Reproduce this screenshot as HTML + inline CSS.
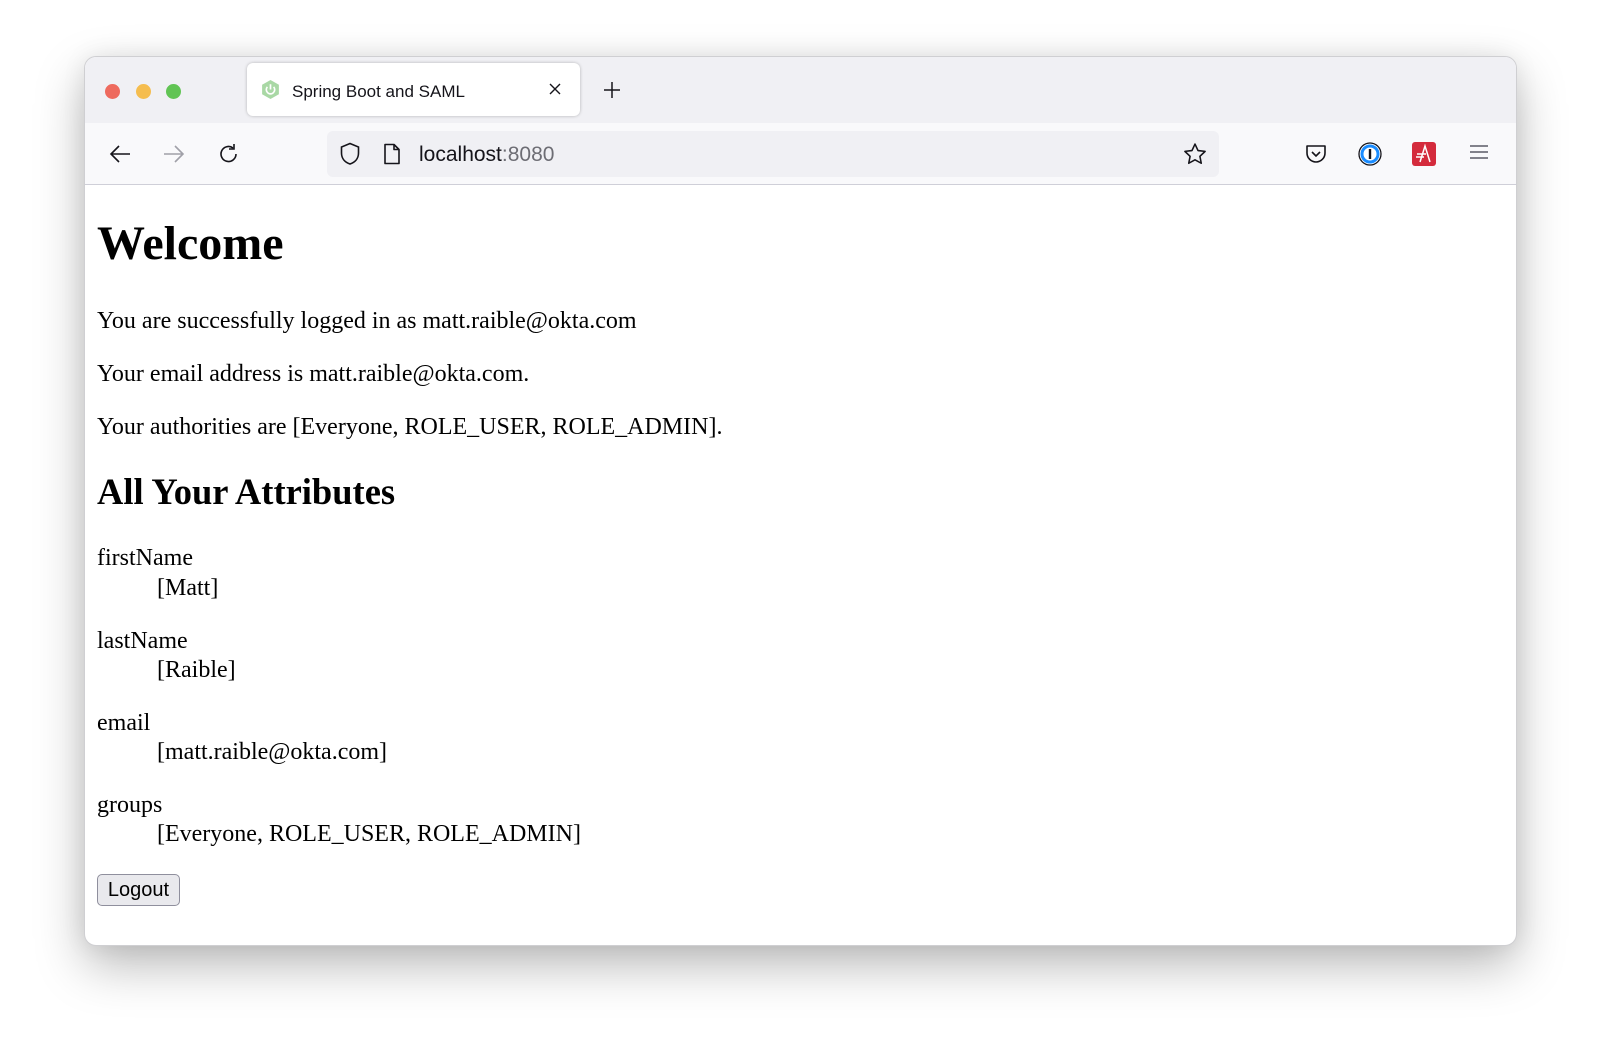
<!DOCTYPE html>
<html><head><meta charset="utf-8"><style>
*{margin:0;padding:0;box-sizing:border-box}
html,body{width:1600px;height:1056px;background:#fff;overflow:hidden}
.win{position:absolute;left:85px;top:57px;width:1431px;height:888px;border-radius:11px;background:#fff;box-shadow:0 0 0 1px #cfcfd2,0 20px 50px rgba(0,0,0,.28),0 0 25px rgba(0,0,0,.08);overflow:hidden}
.tabbar{position:absolute;left:0;top:0;width:100%;height:66px;background:#f0f0f4}
.toolbar{position:absolute;left:0;top:66px;width:100%;height:62px;background:#f9f9fb;border-bottom:1px solid #cfcfd8}
.dot{position:absolute;top:27px;width:15px;height:15px;border-radius:50%}
.tab{position:absolute;left:162px;top:6px;width:333px;height:53px;background:#fff;border-radius:6px;box-shadow:0 0 3px rgba(0,0,0,.25)}
.a{position:absolute;font-family:"Liberation Sans",sans-serif}
.s{position:absolute;font-family:"Liberation Serif",serif;line-height:1;color:#000;white-space:nowrap}
.url{position:absolute;left:242px;top:8px;width:892px;height:46px;background:#f0f0f4;border-radius:6px}
</style></head><body>
<div class="win">
 <div class="tabbar">
  <div class="dot" style="left:20px;background:#ee6a5e"></div>
  <div class="dot" style="left:51px;background:#f5bd4f"></div>
  <div class="dot" style="left:81px;background:#61c454"></div>
  <div class="tab">
   <svg style="position:absolute;left:13px;top:16px" width="21" height="21" viewBox="0 0 20 20"><polygon points="10,1 18,5.5 18,14.5 10,19 2,14.5 2,5.5" fill="#a9d8a5"/><path d="M7 7.5a4 4 0 1 0 6 0" stroke="#fff" stroke-width="1.6" fill="none"/><path d="M10 5v5" stroke="#fff" stroke-width="1.6"/></svg>
   <div class="a" style="left:45px;top:19px;font-size:17px;color:#15141a">Spring Boot and SAML</div>
   <svg style="position:absolute;left:302px;top:20px" width="12" height="12"><path d="M1 1L11 11M11 1L1 11" stroke="#15141a" stroke-width="1.4"/></svg>
  </div>
  <svg style="position:absolute;left:518px;top:24px" width="18" height="18"><path d="M9 1v16M1 9h16" stroke="#15141a" stroke-width="1.5"/></svg>
 </div>
 <div class="toolbar">
  <svg style="position:absolute;left:24px;top:21px" width="22" height="20"><path d="M21 10H3M10 2L2 10l8 8" stroke="#15141a" stroke-width="1.6" fill="none"/></svg>
  <svg style="position:absolute;left:78px;top:21px" width="22" height="20"><path d="M1 10h18M12 2l8 8-8 8" stroke="#a0a0a8" stroke-width="1.6" fill="none"/></svg>
  <svg style="position:absolute;left:132px;top:19px" width="24" height="24"><path d="M19 12a7.5 7.5 0 1 1-3-6" stroke="#15141a" stroke-width="1.6" fill="none"/><path d="M17 2v5h-5" stroke="#15141a" stroke-width="1.6" fill="none"/></svg>
  <div class="url">
   <svg style="position:absolute;left:12px;top:11px" width="22" height="24"><path d="M11 1.5L2.5 5v6c0 6 4 9.5 8.5 11 4.5-1.5 8.5-5 8.5-11V5z" stroke="#15141a" stroke-width="1.6" fill="none"/></svg>
   <svg style="position:absolute;left:56px;top:12px" width="18" height="22"><path d="M2 1.5h9l5 5v14H2z M11 1.5v5h5" stroke="#15141a" stroke-width="1.6" fill="none" stroke-linejoin="round"/></svg>
   <div class="a" style="left:92px;top:12px;font-size:21px;color:#15141a">localhost<span style="color:#6d6d74">:8080</span></div>
   <svg style="position:absolute;left:855px;top:11px" width="26" height="25" viewBox="0 0 24 24"><path d="M12 2l2.9 6.2 6.8.8-5 4.7 1.3 6.7L12 17.1 6 20.4l1.3-6.7-5-4.7 6.8-.8z" stroke="#15141a" stroke-width="1.5" fill="none" stroke-linejoin="round"/></svg>
  </div>
  <svg style="position:absolute;left:1220px;top:20px" width="22" height="22"><path d="M2 3h18v7a9 9 0 0 1-18 0z" stroke="#15141a" stroke-width="1.6" fill="none" stroke-linejoin="round"/><path d="M7 9l4 4 4-4" stroke="#15141a" stroke-width="1.6" fill="none"/></svg>
  <svg style="position:absolute;left:1273px;top:19px" width="24" height="24"><circle cx="12" cy="12" r="11" fill="#fff" stroke="#15141a" stroke-width="1.3"/><circle cx="12" cy="12" r="8" fill="none" stroke="#1a8cff" stroke-width="3"/><rect x="10.8" y="7" width="2.4" height="10" fill="#15141a"/></svg>
  <svg style="position:absolute;left:1327px;top:19px" width="24" height="24"><rect width="24" height="24" rx="3" fill="#d42b3c"/><path d="M8 20L13 4l5 16M5 12h9M4 15h8" stroke="#fff" stroke-width="1.5" fill="none"/></svg>
  <svg style="position:absolute;left:1385px;top:21px" width="18" height="16"><path d="M0 2h18M0 8h18M0 14h18" stroke="#5b5b66" stroke-width="1.6"/></svg>
 </div>
</div>
<div class="s" style="left:97px;top:220px;font-size:48px;font-weight:bold">Welcome</div>
<div class="s" style="left:97px;top:309px;font-size:24px">You are successfully logged in as matt.raible@okta.com</div>
<div class="s" style="left:97px;top:362px;font-size:24px">Your email address is matt.raible@okta.com.</div>
<div class="s" style="left:97px;top:415px;font-size:24px">Your authorities are [Everyone, ROLE_USER, ROLE_ADMIN].</div>
<div class="s" style="left:97px;top:474px;font-size:36.5px;font-weight:bold">All Your Attributes</div>
<div class="s" style="left:97px;top:546px;font-size:24px">firstName</div>
<div class="s" style="left:157px;top:576px;font-size:24px">[Matt]</div>
<div class="s" style="left:97px;top:629px;font-size:24px">lastName</div>
<div class="s" style="left:157px;top:658px;font-size:24px">[Raible]</div>
<div class="s" style="left:97px;top:711px;font-size:24px">email</div>
<div class="s" style="left:157px;top:740px;font-size:24px">[matt.raible@okta.com]</div>
<div class="s" style="left:97px;top:793px;font-size:24px">groups</div>
<div class="s" style="left:157px;top:822px;font-size:24px">[Everyone, ROLE_USER, ROLE_ADMIN]</div>
<div style="position:absolute;left:97px;top:874px;width:83px;height:32px;border:1px solid #8f8f9d;border-radius:5px;background:#e9e9ed;font-family:'Liberation Sans',sans-serif;font-size:20px;line-height:31px;text-align:center;color:#000">Logout</div>
</body></html>
